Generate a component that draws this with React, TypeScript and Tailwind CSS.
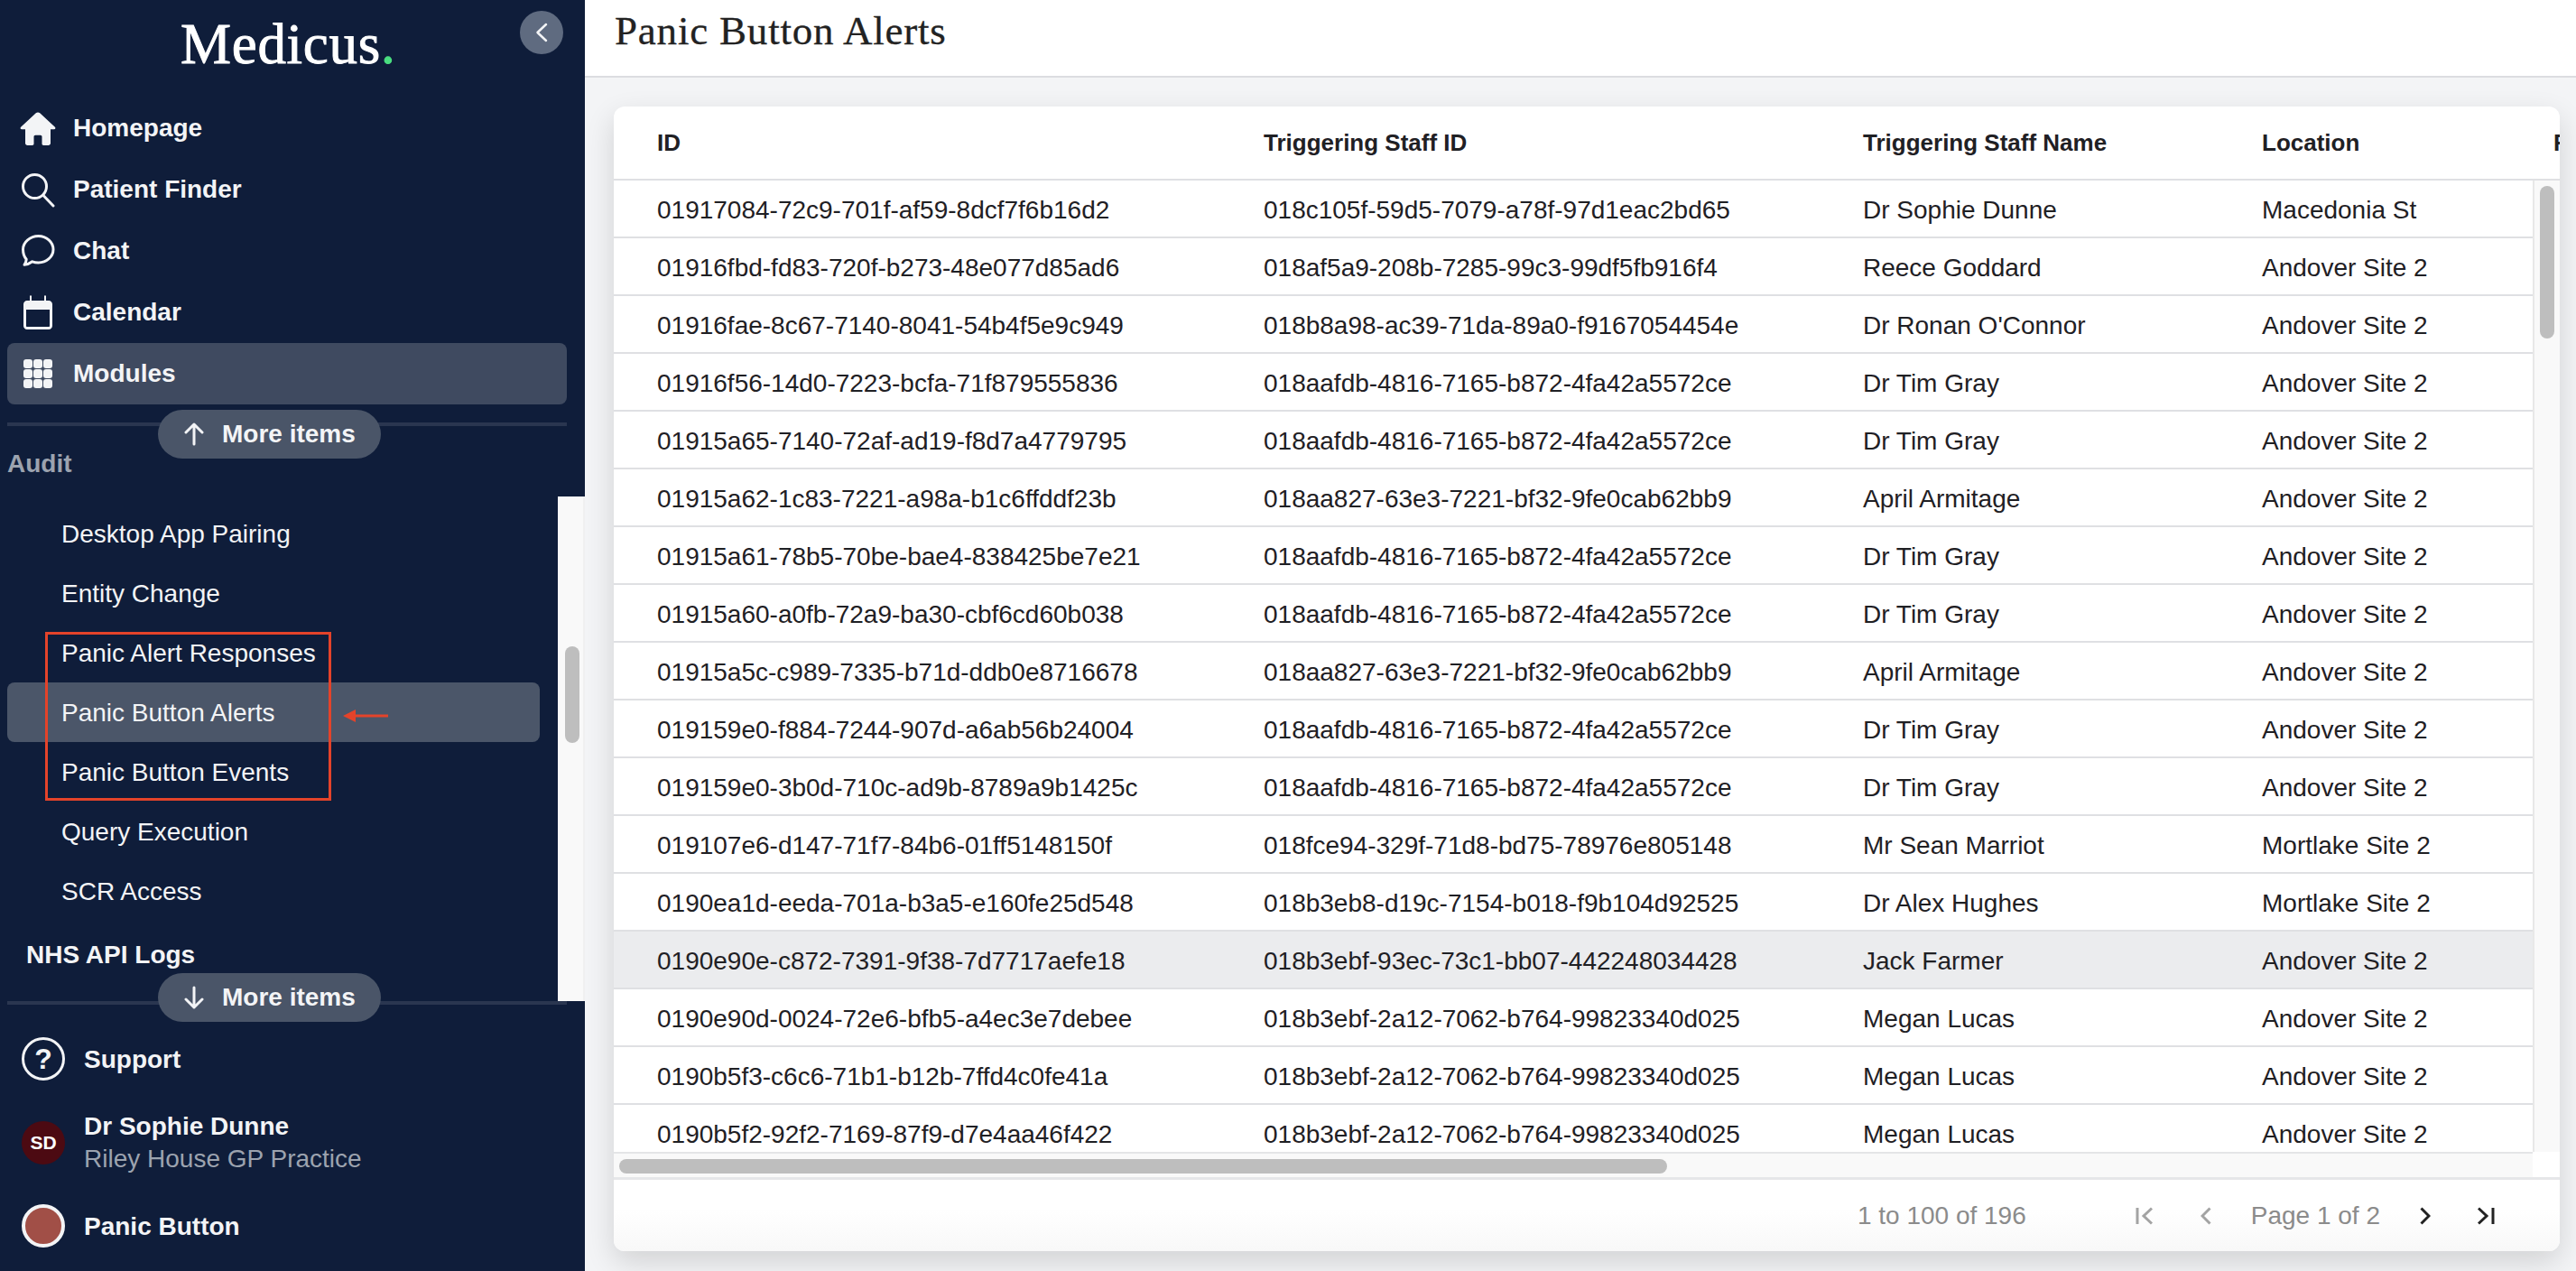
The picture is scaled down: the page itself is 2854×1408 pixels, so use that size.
const rows = [
  ["01917084-72c9-701f-af59-8dcf7f6b16d2", "018c105f-59d5-7079-a78f-97d1eac2bd65", "Dr Sophie Dunne", "Macedonia St"],
  ["01916fbd-fd83-720f-b273-48e077d85ad6", "018af5a9-208b-7285-99c3-99df5fb916f4", "Reece Goddard", "Andover Site 2"],
  ["01916fae-8c67-7140-8041-54b4f5e9c949", "018b8a98-ac39-71da-89a0-f9167054454e", "Dr Ronan O'Connor", "Andover Site 2"],
  ["01916f56-14d0-7223-bcfa-71f879555836", "018aafdb-4816-7165-b872-4fa42a5572ce", "Dr Tim Gray", "Andover Site 2"],
  ["01915a65-7140-72af-ad19-f8d7a4779795", "018aafdb-4816-7165-b872-4fa42a5572ce", "Dr Tim Gray", "Andover Site 2"],
  ["01915a62-1c83-7221-a98a-b1c6ffddf23b", "018aa827-63e3-7221-bf32-9fe0cab62bb9", "April Armitage", "Andover Site 2"],
  ["01915a61-78b5-70be-bae4-838425be7e21", "018aafdb-4816-7165-b872-4fa42a5572ce", "Dr Tim Gray", "Andover Site 2"],
  ["01915a60-a0fb-72a9-ba30-cbf6cd60b038", "018aafdb-4816-7165-b872-4fa42a5572ce", "Dr Tim Gray", "Andover Site 2"],
  ["01915a5c-c989-7335-b71d-ddb0e8716678", "018aa827-63e3-7221-bf32-9fe0cab62bb9", "April Armitage", "Andover Site 2"],
  ["019159e0-f884-7244-907d-a6ab56b24004", "018aafdb-4816-7165-b872-4fa42a5572ce", "Dr Tim Gray", "Andover Site 2"],
  ["019159e0-3b0d-710c-ad9b-8789a9b1425c", "018aafdb-4816-7165-b872-4fa42a5572ce", "Dr Tim Gray", "Andover Site 2"],
  ["019107e6-d147-71f7-84b6-01ff5148150f", "018fce94-329f-71d8-bd75-78976e805148", "Mr Sean Marriot", "Mortlake Site 2"],
  ["0190ea1d-eeda-701a-b3a5-e160fe25d548", "018b3eb8-d19c-7154-b018-f9b104d92525", "Dr Alex Hughes", "Mortlake Site 2"],
  ["0190e90e-c872-7391-9f38-7d7717aefe18", "018b3ebf-93ec-73c1-bb07-442248034428", "Jack Farmer", "Andover Site 2"],
  ["0190e90d-0024-72e6-bfb5-a4ec3e7debee", "018b3ebf-2a12-7062-b764-99823340d025", "Megan Lucas", "Andover Site 2"],
  ["0190b5f3-c6c6-71b1-b12b-7ffd4c0fe41a", "018b3ebf-2a12-7062-b764-99823340d025", "Megan Lucas", "Andover Site 2"],
  ["0190b5f2-92f2-7169-87f9-d7e4aa46f422", "018b3ebf-2a12-7062-b764-99823340d025", "Megan Lucas", "Andover Site 2"],
];

const HomeIcon = () => (
  <svg viewBox="0 0 40 40" className="w-10 h-10 shrink-0" fill="#f3f4f6">
    <path d="M17.800 3.300c1.200-1.200 3.200-1.200 4.400 0l16.700 15.500c1 1 .4 2.500-1 2.500H34v15.200c0 1.500-1 2.500-2.500 2.500h-5.300c-1 0-1.700-.7-1.700-1.700v-7.800c0-1-.7-1.700-1.700-1.700h-5.600c-1 0-1.700.7-1.700 1.700v7.800c0 1-.7 1.700-1.700 1.700H8.500C7 39 6 38 6 36.500V21.300H2.100c-1.400 0-2-1.500-1-2.500Z" />
  </svg>
);

const SearchIcon = () => (
  <svg viewBox="0 0 40 40" className="w-10 h-10 shrink-0" fill="none" stroke="#f3f4f6" strokeWidth="3">
    <circle cx="16.500" cy="16.500" r="13" />
    <path d="m26 26.500 11 11.500" strokeLinecap="round" />
  </svg>
);

const ChatIcon = () => (
  <svg viewBox="0 0 40 40" className="w-10 h-10 shrink-0" fill="none" stroke="#f3f4f6" strokeWidth="3" strokeLinejoin="round">
    <path d="M20.500 3.500c9 0 16.500 6.600 16.500 14.800S29.500 33 20.500 33c-2.500 0-4.600-.4-6.700-1.200-2.500 1.900-5.300 3.100-8.800 3.500 1.400-1.900 2-3.700 2.200-6C4.900 26.500 3.500 22.600 3.500 18.300 3.500 10.100 11.500 3.500 20.500 3.500Z" />
  </svg>
);

const CalendarIcon = () => (
  <svg viewBox="0 0 40 40" className="w-10 h-10 shrink-0" fill="#f3f4f6">
    <path d="M11 2.500c0-.8.500-1.300 1-1.300s1 .5 1 1.300V7h14V2.500c0-.8.500-1.300 1-1.300s1 .5 1 1.300V7h3c2.200 0 4 1.800 4 4v24c0 2.200-1.800 4-4 4H8c-2.200 0-4-1.800-4-4V11c0-2.200 1.800-4 4-4h3Zm-4 14.500v18c0 .600.400 1 1 1h24c.600 0 1-.4 1-1V17Z" />
  </svg>
);

const GridIcon = () => (
  <svg viewBox="0 0 40 40" className="w-10 h-10 shrink-0" fill="#f3f4f6">
    {[4, 15, 26].flatMap((y) =>
      [4, 15, 26].map((x) => <rect key={`${x}-${y}`} x={x} y={y} width="10" height="10" rx="3" />)
    )}
  </svg>
);

const NavItem = ({ icon, label, active }: { icon: React.ReactNode; label: string; active?: boolean }) => (
  <div className={`h-[68px] shrink-0 ml-2 mr-5 pl-[14px] flex items-center gap-[19px] rounded-lg font-bold text-[#f3f4f6] ${active ? "bg-[#3f4a60]" : ""}`}>
    {icon}
    <span>{label}</span>
  </div>
);

const SubItem = ({ label, active }: { label: string; active?: boolean }) => (
  <div className={`h-[66px] ml-2 w-[590px] pl-[60px] pt-[2px] flex items-center rounded-lg text-[#f3f4f6] ${active ? "bg-[#4b5669]" : ""}`}>
    {label}
  </div>
);

const MoreItems = ({ down }: { down?: boolean }) => (
  <div className="h-[54px] w-[247px] rounded-full bg-[#4a5568] flex items-center gap-5 pl-[29px] font-bold text-[#f3f4f6]">
    <svg viewBox="0 0 22 26" className="w-[22px] h-[26px]" fill="none" stroke="#f3f4f6" strokeWidth="3" strokeLinecap="round" strokeLinejoin="round">
      {down ? <path d="M11 2v22M2 15l9 9 9-9" /> : <path d="M11 24V2M2 11l9-9 9 9" />}
    </svg>
    More items
  </div>
);

const Divider = ({ down }: { down?: boolean }) => (
  <div className="relative z-10 h-1 shrink-0 ml-2 mr-5 bg-[#2a3650]">
    <div className={`absolute left-[167px] ${down ? "top-[-31px]" : "top-[-14px]"}`}>
      <MoreItems down={down} />
    </div>
  </div>
);

const Sidebar = () => (
  <aside className="w-[648px] h-[1408px] shrink-0 bg-[#0f1d3a] text-white text-[28px] flex flex-col">
    <div className="h-[108px] shrink-0 relative">
      <div className="absolute left-[200px] top-[13px] font-['Liberation_Serif',serif] text-[63px] leading-[72px] tracking-[0.7px] [-webkit-text-stroke:0.9px_white]">
        Medicus<span className="text-[#4ade80] [-webkit-text-stroke:1.2px_#4ade80]">.</span>
      </div>
      <div className="absolute left-[576px] top-3 w-12 h-12 rounded-full bg-[#5f6b80] flex items-center justify-center">
        <svg viewBox="0 0 14 22" className="w-[14px] h-[22px]" fill="none" stroke="#f3f4f6" strokeWidth="2.500" strokeLinecap="round" strokeLinejoin="round">
          <path d="M12 2 2.500 11l9.500 9" />
        </svg>
      </div>
    </div>
    <NavItem icon={<HomeIcon />} label="Homepage" />
    <NavItem icon={<SearchIcon />} label="Patient Finder" />
    <NavItem icon={<ChatIcon />} label="Chat" />
    <NavItem icon={<CalendarIcon />} label="Calendar" />
    <NavItem icon={<GridIcon />} label="Modules" active />
    <div className="h-5 shrink-0" />
    <Divider />
    <div className="h-[637px] shrink-0 relative overflow-hidden">
      <div className="mt-6 ml-2 h-9 leading-9 font-bold text-[#9ca3af]">Audit</div>
      <div className="mt-[26px]">
        <SubItem label="Desktop App Pairing" />
        <SubItem label="Entity Change" />
        <SubItem label="Panic Alert Responses" />
        <SubItem label="Panic Button Alerts" active />
        <SubItem label="Panic Button Events" />
        <SubItem label="Query Execution" />
        <SubItem label="SCR Access" />
      </div>
      <div className="h-[76px] pl-[29px] flex items-center font-bold text-[#f3f4f6]">NHS API Logs</div>
      <div className="absolute left-[618px] top-[78px] bottom-0 w-[30px] bg-[#f9f9f9] border-r-2 border-[#f0f0f0]" />
      <div className="absolute left-[626px] top-[244px] w-4 h-[107px] rounded-full bg-[#bebebe]" />
      <div className="absolute left-[50px] top-[228px] w-[317px] h-[187px] border-[3px] border-[#e4432a]" />
      <svg viewBox="0 0 50 20" className="absolute left-[380px] top-[311px] w-[50px] h-5" fill="#e4432a">
        <path d="M0 10 14 3v5.500h36v3H14V17Z" />
      </svg>
    </div>
    <Divider down />
    <div className="mt-9 h-12 shrink-0 pl-6 flex items-center gap-[21px] font-bold text-[#f3f4f6]">
      <div className="w-12 h-12 rounded-full border-[3.500px] border-[#f3f4f6] flex items-center justify-center text-[32px] leading-none">?</div>
      <span className="pt-[2px]">Support</span>
    </div>
    <div className="mt-[45px] h-12 shrink-0 pl-6 flex items-center gap-[21px]">
      <div className="w-12 h-12 rounded-full bg-[#4c0a12] flex items-center justify-center text-[21px] font-bold text-white">SD</div>
      <div className="leading-9">
        <div className="font-bold text-[#f3f4f6]">Dr Sophie Dunne</div>
        <div className="text-[#9ca3af]">Riley House GP Practice</div>
      </div>
    </div>
    <div className="mt-[44px] h-12 shrink-0 pl-6 flex items-center gap-[21px] font-bold text-[#f3f4f6]">
      <div className="w-12 h-12 rounded-full border-4 border-[#f3f4f6] bg-[#a14f47]" />
      <span className="pt-[2px]">Panic Button</span>
    </div>
  </aside>
);

const colClass = "grid grid-cols-[672px_664px_442px_323px_1fr]";

const PagerIcon = ({ d, w, on }: { d: string; w: number; on?: boolean }) => (
  <svg viewBox={`0 0 ${w} 20`} width={w} height={20} fill="none" stroke={on ? "#222222" : "#a3a3a3"} strokeWidth="3">
    <path d={d} />
  </svg>
);

const Grid = () => (
  <div className="w-[2156px] h-[1268px] ml-8 mt-8 bg-white rounded-xl overflow-hidden shadow-[0_12px_32px_rgba(0,0,0,0.14)] flex flex-col text-[28px] text-[#1f2024]">
    <div className={`${colClass} h-[82px] shrink-0 items-center text-[26px] font-bold border-b-2 border-[#dfe0e3]`}>
      <div className="pl-12">ID</div>
      <div className="pl-12">Triggering Staff ID</div>
      <div className="pl-12">Triggering Staff Name</div>
      <div className="pl-12">Location</div>
      <div className="pl-12 whitespace-nowrap">F</div>
    </div>
    <div className="h-[1076px] shrink-0 flex">
      <div className="w-[2126px] overflow-hidden">
        {rows.map((r, i) => (
          <div key={r[0]} className={`${colClass} h-16 items-center border-b-2 border-[#dfe0e3] ${i === 13 ? "bg-[#ebecee]" : ""}`}>
            {r.map((c) => (
              <div key={c} className="pl-12 pt-[3px] whitespace-nowrap">{c}</div>
            ))}
          </div>
        ))}
      </div>
      <div className="w-[30px] bg-[#f9f9f9] border-l-2 border-[#e8e8e8] pl-[6px] pt-[6px]">
        <div className="w-4 h-[169px] rounded-full bg-[#bebebe]" />
      </div>
    </div>
    <div className="h-[28px] shrink-0 flex">
      <div className="w-[2126px] border-t-2 border-[#e4e5e7] bg-[#f9f9f9] pl-[6px] pt-[6px]">
        <div className="w-[1161px] h-4 rounded-full bg-[#bebebe]" />
      </div>
    </div>
    <div className="flex-1 border-t-[3px] border-[#e6e7e9] bg-gradient-to-b from-white from-40% to-[#f8f8f8] flex items-center justify-end pr-[71px] text-[#8b8b8b]">
      <span className="mr-[120px]">1 to 100 of 196</span>
      <PagerIcon w={20} d="M3 1v18M19 1.500 10 10l9 8.500" />
      <span className="w-[53px]" />
      <PagerIcon w={12} d="M10.500 1.500 2 10l8.500 8.500" />
      <span className="mx-[44px]">Page 1 of 2</span>
      <PagerIcon on w={12} d="M1.500 1.500 10 10l-8.500 8.500" />
      <span className="w-[52px]" />
      <PagerIcon on w={20} d="M1 1.500 10 10l-9 8.500M17 1v18" />
    </div>
  </div>
);

export default function App() {
  return (
    <div className="w-[2854px] h-[1408px] flex overflow-hidden font-['Liberation_Sans',Arial,sans-serif]">
      <Sidebar />
      <main className="flex-1 flex flex-col bg-[#f3f4f6]">
        <header className="h-[86px] shrink-0 bg-white border-b-2 border-[#dcdde0] pl-[33px] flex items-center pb-[14px] font-['Liberation_Serif',serif] text-[45px] tracking-[0.8px] text-[#222222] [-webkit-text-stroke:0.3px_#222222]">
          Panic Button Alerts
        </header>
        <Grid />
      </main>
    </div>
  );
}
